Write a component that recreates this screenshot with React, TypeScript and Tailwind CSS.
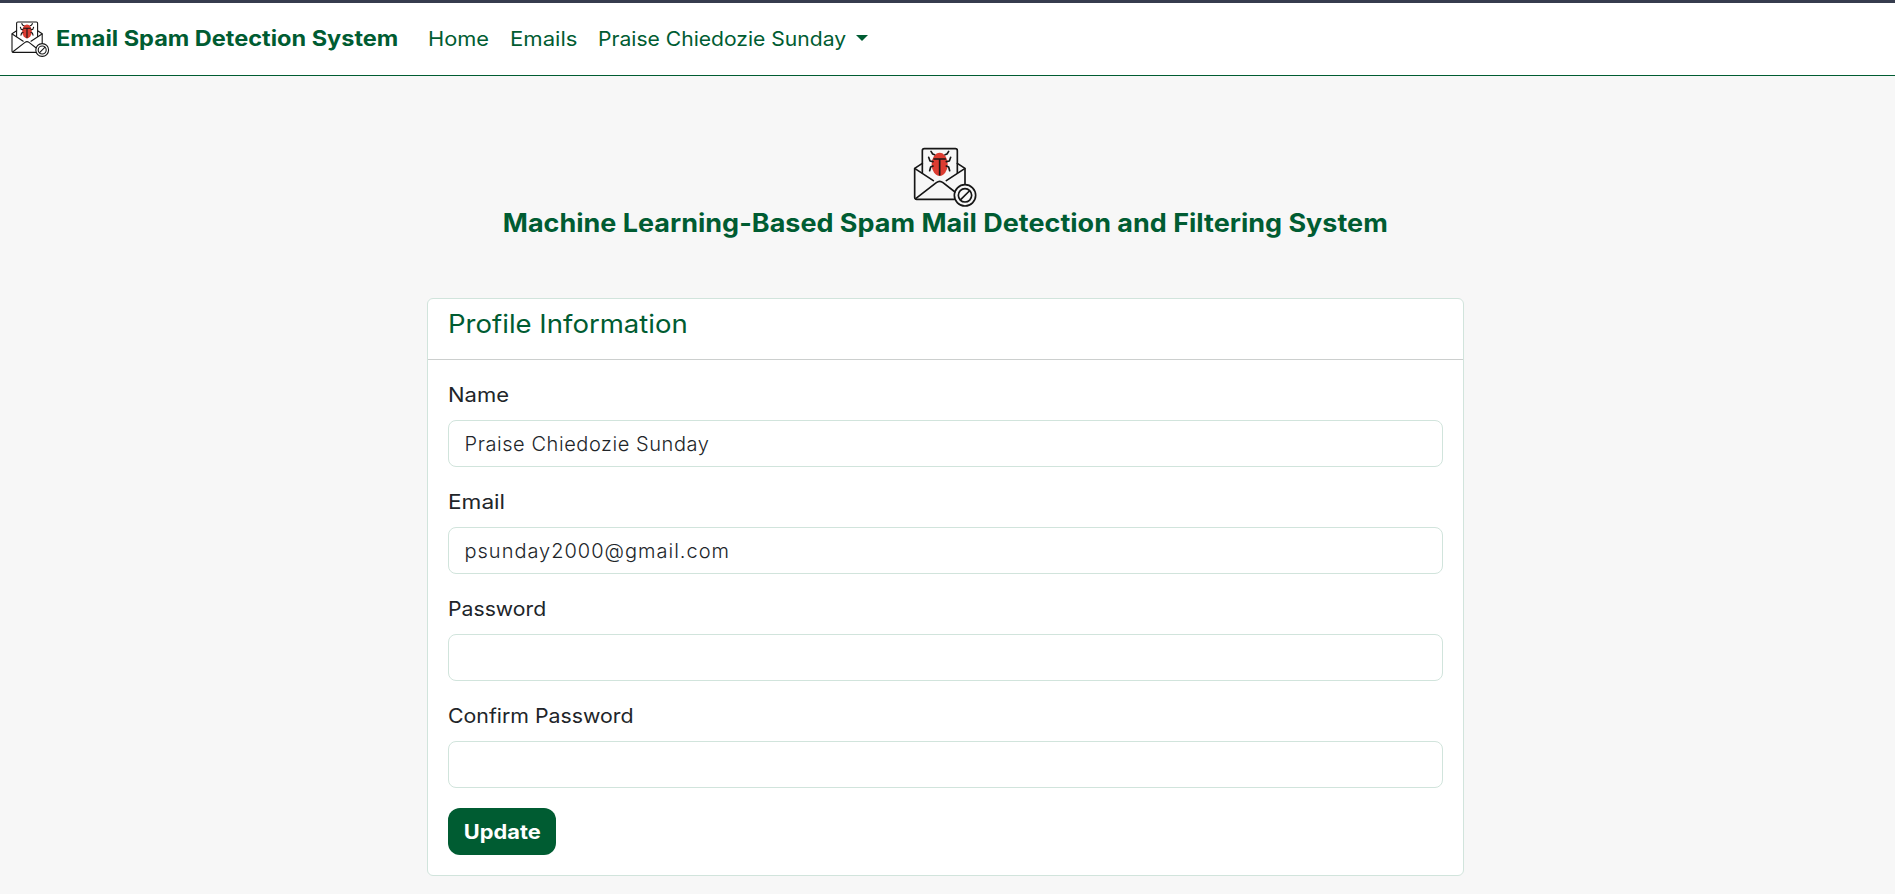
type LogoProps = { className: string };

function SpamLogo({ className }: LogoProps) {
  return (
    <svg
      viewBox="40 35 195 180"
      className={className}
      fill="none"
      stroke="#161616"
      strokeLinecap="round"
      strokeLinejoin="round"
      aria-hidden="true"
    >
      {/* sheet and envelope */}
      <path d="M68 112V46q0-6 6-6h93q6 0 6 6v66" />
      <path d="M68 84 45 99v87q0 6 6 6h113M173 84l23 15v46" />
      <path d="m46 100 55 36M195 100l-55 36" />
      <path d="m48 190 62-48q10-8 20 0l36 28" />
      {/* bug */}
      <ellipse cx="120" cy="87" rx="24" ry="35" fill="#dc3c31" stroke="none" />
      <path d="M103 71h34M120 71v47" />
      <path d="m94 48 5 8 6 2M147 48l-5 8-6 2M87 66l4 11 9 2M153 66l-4 11-9 2M90 106l3-11 7-3M150 106l-3-11-7-3" />
      {/* blocked sign */}
      <circle cx="196" cy="180" r="32" />
      <circle cx="196" cy="180" r="20" />
      <path d="m183 193 26-26" />
    </svg>
  );
}

const fields = [
  { label: "Name", type: "text", value: "Praise Chiedozie Sunday", labelClass: "scale-x-[1.1]", inputClass: "tracking-[0.57px]" },
  { label: "Email", type: "email", value: "psunday2000@gmail.com", labelClass: "scale-x-[1.13]", inputClass: "tracking-[1px]" },
  { label: "Password", type: "password", value: "", labelClass: "scale-x-[1.06]", inputClass: "" },
  { label: "Confirm Password", type: "password", value: "", labelClass: "scale-x-[1.065]", inputClass: "" },
];

export default function App() {
  return (
    <div className="min-h-[894px] bg-[#f7f7f7] font-['Inter','Liberation_Sans',sans-serif] text-xl leading-[30px] text-[#212529]">
      <div className="h-[3px] bg-[#363c4e]" />
      <nav className="flex h-[73px] items-center whitespace-nowrap border-b border-[#005c32] bg-white pl-[10.5px] text-[#005c32]">
        <a href="#" className="flex w-[417.5px] items-center">
          <SpamLogo className="mr-[6px] h-[36px] w-[39px] shrink-0 stroke-[5.5px]" />
          <span className="-mt-px origin-left scale-x-[1.12] text-[21px] font-bold">Email Spam Detection System</span>
        </a>
        <a href="#" className="w-[82px] origin-left"><span className="inline-block origin-left scale-x-[1.09]">Home</span></a>
        <a href="#" className="w-[88px]"><span className="inline-block origin-left scale-x-[1.105]">Emails</span></a>
        <a href="#" className="flex items-center">
          <span className="origin-left scale-x-[1.055]">Praise Chiedozie Sunday</span>
          <span className="-mt-[2px] ml-[22.5px] border-x-[6px] border-t-[6px] border-x-transparent border-t-[#005c32]" />
        </a>
      </nav>

      <main className="flex flex-col items-center pr-1 pt-[71px]">
        <SpamLogo className="h-[60px] w-[65px] stroke-[5px]" />
        <h1 className="mt-px scale-x-[1.058] whitespace-nowrap text-[25.5px] font-bold leading-[30px] text-[#005c32]">
          Machine Learning-Based Spam Mail Detection and Filtering System
        </h1>

        <section className="mt-[60px] w-[1037px] rounded-md border border-[#d1e4dc] bg-white">
          <header className="h-[61px] border-b border-[#cccfce] px-5 pt-[10px]">
            <h2 className="origin-left scale-x-[1.08] text-[25.5px] leading-[30px] text-[#005c32]">Profile Information</h2>
          </header>
          <form className="flex flex-col gap-5 p-5" onSubmit={(e) => e.preventDefault()}>
            {fields.map((f) => (
              <label key={f.label} className="flex flex-col gap-[10px]">
                <span className={`origin-left self-start ${f.labelClass}`}>{f.label}</span>
                <input
                  type={f.type}
                  defaultValue={f.value}
                  className={`h-[47px] w-full rounded-lg border border-[#d1e4dc] bg-white px-[15.5px] font-light outline-none ${f.inputClass}`}
                />
              </label>
            ))}
            <button
              type="submit"
              className="flex h-[47px] w-[108px] items-center justify-center rounded-xl bg-[#005c32] font-bold text-white"
            >
              <span className="scale-x-[1.09]">Update</span>
            </button>
          </form>
        </section>
      </main>
    </div>
  );
}
